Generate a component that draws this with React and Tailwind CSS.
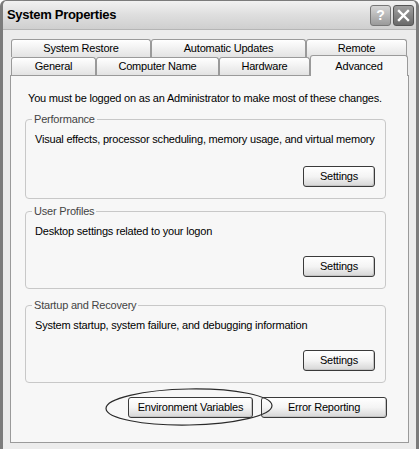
import React from 'react';

const font = { fontFamily: '"Liberation Sans", Arial, sans-serif' };

const XpButton = ({ children, className = '' }) => (
    <div
        className={`flex items-center justify-center h-[21px] rounded-[3px] border border-[#3a3a3a] bg-gradient-to-b from-white via-[#f4f4f4] to-[#d6d6d6] text-[11px] tracking-[-0.2px] text-black shadow-[inset_-1px_-1px_0_#c4c4c4] ${className}`}
    >
        {children}
    </div>
);

const Tab = ({ label, className = '' }) => (
    <div
        className={`flex items-center justify-center h-[18px] border border-[#9a9a9a] border-b-0 rounded-t-[3px] bg-gradient-to-b from-white to-[#e3e3e3] text-[11px] tracking-[-0.2px] text-black ${className}`}
    >
        {label}
    </div>
);

// group box with caption sitting on its top border
const Group = ({ title, text, height, className = '' }) => (
    <div
        className={`relative ml-[14px] mr-[22px] border border-[#c8c8c8] rounded-[4px] flex flex-col pl-[9px] pr-[10px] pt-[12px] pb-[11px] ${className}`}
        style={{ height }}
    >
        <span className="absolute left-[6px] top-[-8px] px-[2px] bg-[#f7f7f7] text-[11px] leading-[14px] tracking-[-0.2px] text-[#444]">
            {title}
        </span>
        <p className="text-[11px] leading-[14px] tracking-[-0.2px] whitespace-nowrap text-black">{text}</p>
        <div className="mt-auto flex justify-end">
            <XpButton className="w-[72px]">Settings</XpButton>
        </div>
    </div>
);

export default function App() {
    return (
        <div className="w-[419px] h-[449px] bg-white overflow-hidden" style={font}>
            <div className="w-[419px] h-[449px] border-x-[3px] border-t border-[#7c7c7c] rounded-t-[6px] bg-[#ececec] flex flex-col">
                {/* title bar */}
                <div className="h-[29px] shrink-0 flex items-center justify-between pl-[4px] pr-[2px] bg-gradient-to-b from-[#f2f2f2] via-[#dedede] to-[#cfcfcf] rounded-t-[5px] border-b border-[#b5b5b5]">
                    <span className="text-[13px] font-bold text-black tracking-[-0.3px]">System Properties</span>
                    <div className="flex gap-[2px]">
                        <div className="w-[21px] h-[21px] rounded-[3px] border border-[#777] bg-gradient-to-b from-[#d6d6d6] to-[#9a9a9a] flex items-center justify-center text-white text-[14px] font-bold">
                            ?
                        </div>
                        <div className="w-[21px] h-[21px] rounded-[3px] border border-[#555] bg-gradient-to-b from-[#a0a0a0] to-[#6a6a6a] flex items-center justify-center">
                            <svg width="13" height="13" viewBox="0 0 13 13">
                                <path d="M2 2 L11 11 M11 2 L2 11" stroke="white" strokeWidth="2.4" strokeLinecap="square" />
                            </svg>
                        </div>
                    </div>
                </div>

                {/* client area */}
                <div className="flex-1 flex flex-col px-[7px] pt-[9px]">
                    {/* tabs */}
                    <div className="flex pl-[1px]">
                        <Tab label="System Restore" className="w-[140px]" />
                        <Tab label="Automatic Updates" className="w-[155px]" />
                        <Tab label="Remote" className="w-[101px]" />
                    </div>
                    <div className="flex items-end pl-[1px] h-[18px] relative z-10">
                        <Tab label="General" className="w-[85px]" />
                        <Tab label="Computer Name" className="w-[123px]" />
                        <Tab label="Hardware" className="w-[91px]" />
                        <div className="w-[98px] h-[21px] mb-[-1px] border border-[#9a9a9a] border-b-0 rounded-t-[3px] bg-[#f7f7f7] flex justify-center pt-[2px] text-[11px] tracking-[-0.2px] text-black">
                            Advanced
                        </div>
                    </div>

                    {/* tab page */}
                    <div className="w-[399px] h-[368px] border border-[#9a9a9a] bg-[#f7f7f7] flex flex-col">
                        <p className="mt-[15px] ml-[17px] text-[11px] leading-[14px] tracking-[-0.2px] text-black">
                            You must be logged on as an Administrator to make most of these changes.
                        </p>
                        <Group
                            className="mt-[14px]"
                            height={80}
                            title="Performance"
                            text="Visual effects, processor scheduling, memory usage, and virtual memory"
                        />
                        <Group
                            className="mt-[12px]"
                            height={78}
                            title="User Profiles"
                            text="Desktop settings related to your logon"
                        />
                        <Group
                            className="mt-[16px]"
                            height={78}
                            title="Startup and Recovery"
                            text="System startup, system failure, and debugging information"
                        />
                        <div className="relative flex gap-[8px] mt-[14px] pl-[117px]">
                            <XpButton className="w-[125px]">Environment Variables</XpButton>
                            <XpButton className="w-[126px]">Error Reporting</XpButton>
                            <svg className="absolute left-[92px] top-[-10px] pointer-events-none" width="172" height="40" viewBox="0 0 172 40">
                                <ellipse cx="86" cy="20" rx="83" ry="18" fill="none" stroke="#2a2a2a" strokeWidth="1.2" transform="rotate(-1 86 20)" />
                            </svg>
                        </div>
                    </div>
                </div>
            </div>
        </div>
    );
}
